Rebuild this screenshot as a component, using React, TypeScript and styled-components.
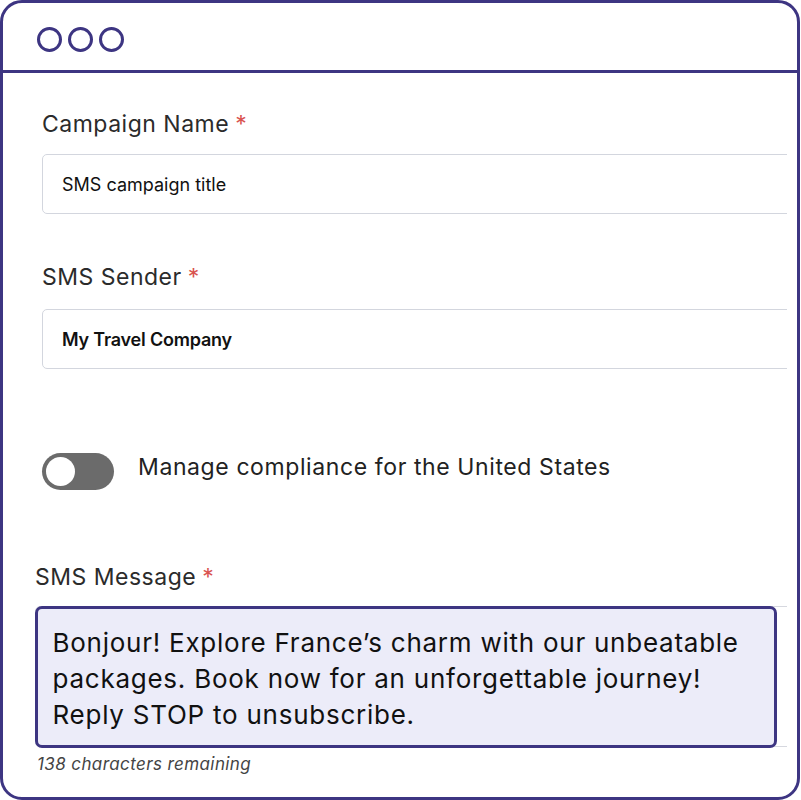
import React from "react";
import styled, { createGlobalStyle } from "styled-components";

const GlobalStyle = createGlobalStyle`
  html, body {
    margin: 0;
    padding: 0;
    background: #ffffff;
  }
  * {
    box-sizing: border-box;
  }
`;

const purple = "#3d3582";

const Frame = styled.div`
  width: 800px;
  height: 800px;
  border: 3px solid ${purple};
  border-radius: 22px;
  background: #ffffff;
  overflow: hidden;
  display: flex;
  flex-direction: column;
  font-family: Inter, "Noto Sans", sans-serif;
`;

const TitleBar = styled.div`
  height: 70px;
  flex: none;
  border-bottom: 3px solid ${purple};
  display: flex;
  align-items: flex-start;
  gap: 6px;
  padding: 24px 0 0 34px;
`;

const Dot = styled.span`
  width: 25px;
  height: 25px;
  border: 3px solid ${purple};
  border-radius: 50%;
`;

const Body = styled.div`
  flex: 1;
  margin-right: 10px;
  overflow: hidden;
  padding: 37px 0 0 32px;
  display: flex;
  flex-direction: column;
`;

const Field = styled.div<{ $indent?: number; $gap?: number }>`
  margin-left: ${({ $indent }) => $indent ?? 0}px;
  margin-bottom: ${({ $gap }) => $gap ?? 0}px;
  display: flex;
  flex-direction: column;
`;

const Label = styled.div<{ $space: number }>`
  font-size: 23px;
  line-height: 28px;
  letter-spacing: 0.5px;
  color: #2b2b2b;
  margin-bottom: ${({ $space }) => $space}px;
  white-space: nowrap;
`;

const Star = styled.span`
  color: #d9534f;
  margin-left: 6px;
`;

const Input = styled.div<{ $bold?: boolean }>`
  width: 900px;
  height: 60px;
  border: 1.5px solid #d3d6de;
  border-radius: 5px;
  padding-left: 19px;
  display: flex;
  align-items: center;
  font-size: 18px;
  color: #111111;
  font-weight: ${({ $bold }) => ($bold ? 600 : 400)};
  letter-spacing: ${({ $bold }) => ($bold ? "-0.2px" : "0")};
  white-space: nowrap;
`;

const ToggleRow = styled.div`
  margin-left: 7px;
  display: flex;
  align-items: flex-start;
  gap: 24px;
  margin-bottom: 73px;
`;

const Switch = styled.div`
  width: 72px;
  height: 37px;
  border-radius: 19px;
  background: #6b6b6b;
  padding: 4px;
  flex: none;
`;

const Knob = styled.div`
  width: 29px;
  height: 29px;
  border-radius: 50%;
  background: #ffffff;
`;

const ToggleText = styled.div`
  font-size: 23px;
  line-height: 28px;
  letter-spacing: 0.6px;
  color: #222222;
  white-space: nowrap;
`;

const MessageWrap = styled.div`
  width: 900px;
  border: 1.5px solid #d6d8df;
  border-radius: 5px;
`;

const MessageBox = styled.div`
  width: 742px;
  margin: -1.5px;
  border: 3px solid ${purple};
  border-radius: 7px;
  background: #ececf9;
  padding: 16px 12px 12px 15px;
  font-size: 26px;
  line-height: 36px;
  letter-spacing: 0.75px;
  color: #111111;
  white-space: nowrap;
`;

const Counter = styled.div`
  margin-top: 7px;
  margin-left: 2px;
  font-size: 17px;
  letter-spacing: 0.4px;
  font-style: italic;
  color: #444444;
`;

export default function App() {
  return (
    <>
      <GlobalStyle />
      <Frame>
        <TitleBar>
          <Dot />
          <Dot />
          <Dot />
        </TitleBar>
        <Body>
          <Field $indent={7} $gap={49}>
            <Label $space={16}>
              Campaign Name<Star>*</Star>
            </Label>
            <Input>SMS campaign title</Input>
          </Field>
          <Field $indent={7} $gap={84}>
            <Label $space={18}>
              SMS Sender<Star>*</Star>
            </Label>
            <Input $bold>My Travel Company</Input>
          </Field>
          <ToggleRow>
            <Switch>
              <Knob />
            </Switch>
            <ToggleText>Manage compliance for the United States</ToggleText>
          </ToggleRow>
          <Field>
            <Label $space={15}>
              SMS Message<Star>*</Star>
            </Label>
            <MessageWrap>
              <MessageBox>
                Bonjour! Explore France’s charm with our unbeatable
                <br />
                packages. Book now for an unforgettable journey!
                <br />
                Reply STOP to unsubscribe.
              </MessageBox>
            </MessageWrap>
            <Counter>138 characters remaining</Counter>
          </Field>
        </Body>
      </Frame>
    </>
  );
}
